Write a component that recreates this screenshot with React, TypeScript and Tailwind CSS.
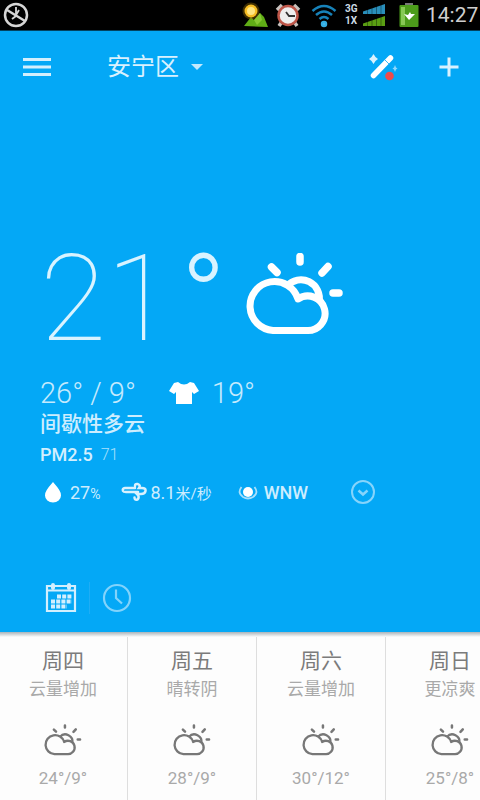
import React from "react";

type Day = { name: string; summary: string; range: string };

const days: Day[] = [
  { name: "周四", summary: "云量增加", range: "24°/9°" },
  { name: "周五", summary: "晴转阴", range: "28°/9°" },
  { name: "周六", summary: "云量增加", range: "30°/12°" },
  { name: "周日", summary: "更凉爽", range: "25°/8°" },
];

function CloudSun({ className, stroke }: { className: string; stroke: number }) {
  return (
    <svg viewBox="0 0 98 82" className={className} fill="none" stroke="currentColor" strokeWidth={stroke} aria-hidden="true">
      <path d="M27 77.500A24.500 24.500 0 1 1 52 46A17.300 17.300 0 1 1 60 77.500Z" strokeLinejoin="round" />
      <path d="M41 33A18.500 18.500 0 0 1 73 49" />
      <g strokeLinecap="round">
        <path d="M54 3.500V9M25.500 14L31 19.500M82 13.500L76 20M87 40H93" strokeWidth={stroke + 0.5} />
      </g>
    </svg>
  );
}

function StatusBar() {
  return (
    <div className="flex h-[31px] items-center justify-between border-b border-[#02425f] bg-black pl-[3px]">
      <svg viewBox="0 0 26 26" className="h-[26px] w-[26px]" fill="none" stroke="#d6d6d6" aria-hidden="true">
        <circle cx="13" cy="13" r="11" strokeWidth="2.500" />
        <path d="M4 8L22 19" strokeWidth="2.500" />
        <path d="M13 5V14L9 17M13 13L16 8" strokeWidth="1.800" />
      </svg>
      <div className="flex items-center">
        <svg viewBox="0 0 28 28" className="mr-[6px] h-7 w-7" aria-hidden="true">
          <path d="M3 25L10 16L13 19L19 12L23 16L27 26Z" fill="#60ad16" />
          <path d="M13 19L19 12L21 19L16 24Z" fill="#86c832" />
          <circle cx="10" cy="10" r="8.500" fill="#8b6500" opacity="0.450" />
          <circle cx="10" cy="10" r="6.500" fill="#f6bd24" />
          <circle cx="10" cy="10" r="4" fill="#ffe681" />
        </svg>
        <svg viewBox="0 0 26 26" className="mr-[10px] h-[26px] w-[26px]" fill="none" aria-hidden="true">
          <path d="M2 8L7 3M24 8L19 3M6 21L4 24M20 21L22 24" stroke="#c8c2be" strokeWidth="3.500" />
          <circle cx="13" cy="13.500" r="9.500" fill="#eee" stroke="#bd5548" strokeWidth="2.500" />
          <path d="M11 10L14 14H20" stroke="#333" strokeWidth="1.800" />
        </svg>
        <svg viewBox="0 0 26 26" className="mr-2 h-[26px] w-[26px]" fill="none" stroke="#1782b9" strokeWidth="2.500" aria-hidden="true">
          <path d="M1.500 9Q13 -1 24.500 9M5 13Q13 6 21 13M8.500 17Q13 13 17.500 17" />
          <circle cx="13" cy="22" r="2" fill="#55c9fb" stroke="#35aee3" />
        </svg>
        <div className="mr-[2px] w-4 font-['Roboto','Liberation_Sans',sans-serif] text-[10px] leading-3 font-bold text-[#ccdbe4]">
          <div>3G</div>
          <div>1X</div>
        </div>
        <svg viewBox="0 0 22 24" className="mr-[14px] h-6 w-[22px]" aria-hidden="true">
          <path d="M0 11V8.500L22 1V11Z" fill="#298eba" />
          <path d="M0 23V20.500L22 13V23Z" fill="#5a9e13" />
          <path d="M4.500 1V24M9 1V24M13.500 1V24M18 1V24" stroke="#000" strokeOpacity="0.350" />
        </svg>
        <svg viewBox="0 0 20 24" className="mr-[7px] h-6 w-5" aria-hidden="true">
          <rect x="6" y="0" width="8" height="3" fill="#777" />
          <rect x="0.500" y="2" width="19" height="22" rx="1" fill="#4c9c1b" />
          <rect x="2" y="4" width="4" height="18" fill="#87c955" />
          <path d="M5 11L9 12L11 9L12 11H16L10 17Z" fill="#fff" />
        </svg>
        <span className="w-[54px] font-['Roboto','Liberation_Sans',sans-serif] text-[21px] leading-6 whitespace-nowrap text-[#cecece]">14:27</span>
      </div>
    </div>
  );
}

function Toolbar() {
  return (
    <header className="flex h-[72px] items-center pr-5 pl-[23px]">
      <button type="button" aria-label="菜单">
        <svg viewBox="0 0 28 20" className="h-5 w-7" stroke="#d3effd" strokeWidth="3" aria-hidden="true">
          <path d="M0 2.500H28M0 10H28M0 17.500H28" />
        </svg>
      </button>
      <button type="button" className="ml-14 flex items-center gap-3 text-[24px] leading-7 text-[#d9f1fe]">
        安宁区
        <svg viewBox="0 0 12 8" className="h-2 w-3" fill="#c2e9fd" aria-hidden="true">
          <path d="M0 1H12L6 7Z" />
        </svg>
      </button>
      <button type="button" aria-label="主题" className="ml-auto">
        <svg viewBox="0 0 30 28" className="h-7 w-[30px]" aria-hidden="true">
          <path d="M5.500 22.500L22.500 5" stroke="#fff" strokeWidth="5.500" strokeLinecap="round" />
          <path d="M17 7L21 11" stroke="#04a8f6" strokeWidth="0.800" />
          <path d="M5.500 1L7.500 4L10 6L7.500 8L5.500 11L3.500 8L1 6L3.500 4Z" fill="#d9f1fe" />
          <path d="M27 12L28 14.500L29.500 15.500L28 16.500L27 19L26 16.500L24.500 15.500L26 14.500Z" fill="#8fd7fc" />
          <circle cx="21.500" cy="23" r="4.300" fill="#ee4b4b" />
        </svg>
      </button>
      <button type="button" aria-label="添加城市" className="ml-10">
        <svg viewBox="0 0 22 22" className="h-[22px] w-[22px]" stroke="#d9f1fe" strokeWidth="3" aria-hidden="true">
          <path d="M11 1.500V20.500M1.500 11H20.500" />
        </svg>
      </button>
    </header>
  );
}

function Current() {
  return (
    <section className="flex grow flex-col justify-end px-10 pb-[18px]">
      <div className="flex items-start font-['Roboto','Liberation_Sans',sans-serif] text-[121px] leading-[120px] text-[#d9f3ff]">
        <span className="font-thin">21</span>
        <span className="ml-2 font-light">°</span>
        <CloudSun className="mt-[14px] ml-5 h-[82px] w-[98px] text-white" stroke={7} />
      </div>
      <div className="mt-[18px] flex items-center text-[29px] leading-8 font-light text-[#c5eafd]">
        <span>26° / 9°</span>
        <svg viewBox="0 0 32 24" className="mr-3 ml-8 h-6 w-8" fill="#fff" aria-hidden="true">
          <path d="M10 1Q16 6 22 1L26 2L31 10L26 13L24 11V23H8V11L6 13L1 10L6 2Z" />
        </svg>
        <span>19°</span>
      </div>
      <p className="text-[21px] leading-[30px] font-medium text-[#cdedfe]">间歇性多云</p>
      <p className="flex items-center gap-2 leading-8">
        <span className="text-[18px] font-medium text-[#d3effe]">PM2.5</span>
        <span className="text-[16px] font-light text-[#a9e0fc]">71</span>
      </p>
      <div className="mt-[5px] flex h-8 items-center pl-1 text-[18px] text-[#cdedfe]">
        <svg viewBox="0 0 18 22" className="mr-2 h-[22px] w-[18px]" fill="#fff" aria-hidden="true">
          <path d="M9 1Q18 11 17 14.500A8 7 0 0 1 1 14.500Q0 11 9 1Z" />
        </svg>
        <span>27<span className="text-[14px]">%</span></span>
        <svg viewBox="0 0 26 20" className="mr-1 ml-5 h-5 w-[26px]" fill="none" stroke="#d9f1fe" strokeWidth="2.500" strokeLinecap="round" aria-hidden="true">
          <path d="M14 4Q14 1.500 16.500 2Q20 3 18 6H21Q25 6 24.500 9Q24 12 20 12H16Q19 15 16.500 17.500Q13.500 18.500 13.500 15.500" />
          <path d="M14 6H4Q1 6.500 2 9Q2.500 10 5 10H17" />
        </svg>
        <span>8.1<span className="text-[15px]">米/秒</span></span>
        <svg viewBox="0 0 20 16" className="mr-[6px] ml-[26px] h-4 w-5" fill="none" stroke="#a9e0fc" strokeWidth="1.800" aria-hidden="true">
          <circle cx="10" cy="8" r="5" fill="#fff" stroke="none" />
          <path d="M3.500 3Q-1 9 5 13Q10 16 15 13Q21 9 16.500 3" />
        </svg>
        <span className="font-medium">WNW</span>
        <button type="button" aria-label="展开详情" className="ml-[42px]">
          <svg viewBox="0 0 26 26" className="h-[26px] w-[26px]" fill="none" stroke="#86d4fb" strokeWidth="2" aria-hidden="true">
            <circle cx="13" cy="13" r="11" />
            <path d="M8.500 11.500L13 15.500L17.500 11.500" strokeWidth="2.500" />
          </svg>
        </button>
      </div>
      <div className="mt-[74px] flex h-8 items-center pl-[5px]">
        <button type="button" aria-label="每日预报">
          <svg viewBox="0 0 32 32" className="h-8 w-8" fill="none" stroke="#d3effe" strokeWidth="2.200" aria-hidden="true">
            <path d="M2 4H30V29H2ZM2 8.500H30" />
            <path d="M8 3V6M24 3V6" strokeWidth="4" strokeLinecap="round" />
            <path d="M12 14.500H27M6 19.500H27M6 24.500H22" strokeWidth="4" strokeDasharray="4 1.200" />
          </svg>
        </button>
        <span className="mx-3 h-8 w-px bg-[#1fadf5]" />
        <button type="button" aria-label="每小时预报">
          <svg viewBox="0 0 30 30" className="h-[30px] w-[30px]" fill="none" stroke="#82d3fb" strokeWidth="2.200" aria-hidden="true">
            <circle cx="15" cy="15" r="13" />
            <path d="M14 6.500V15L20 20.500" />
          </svg>
        </button>
      </div>
    </section>
  );
}

export default function App() {
  return (
    <div className="flex min-h-screen flex-col overflow-hidden bg-[#04a8f6] font-['Roboto','Noto_Sans_CJK_SC',sans-serif]">
      <StatusBar />
      <Toolbar />
      <Current />
      <section className="overflow-hidden bg-[#fdfdfd]">
        <div className="h-[5px] bg-linear-to-b from-[#a9b4ba] to-[#fdfdfd]" />
        <div className="-ml-px flex">
          {days.map((day) => (
            <article key={day.name} className="flex w-[129px] shrink-0 flex-col items-center border-r border-[#dedede] pt-[9px] pb-[10px]">
              <h2 className="text-[21px] leading-[30px] text-[#7b7b7b]">{day.name}</h2>
              <p className="text-[17px] leading-[26px] text-[#a9a9a9]">{day.summary}</p>
              <CloudSun className="mt-[22px] h-8 w-[38px] text-[#777777]" stroke={6} />
              <p className="mt-[10px] text-[17px] leading-6 text-[#a9a9a9]">{day.range}</p>
            </article>
          ))}
        </div>
      </section>
    </div>
  );
}
